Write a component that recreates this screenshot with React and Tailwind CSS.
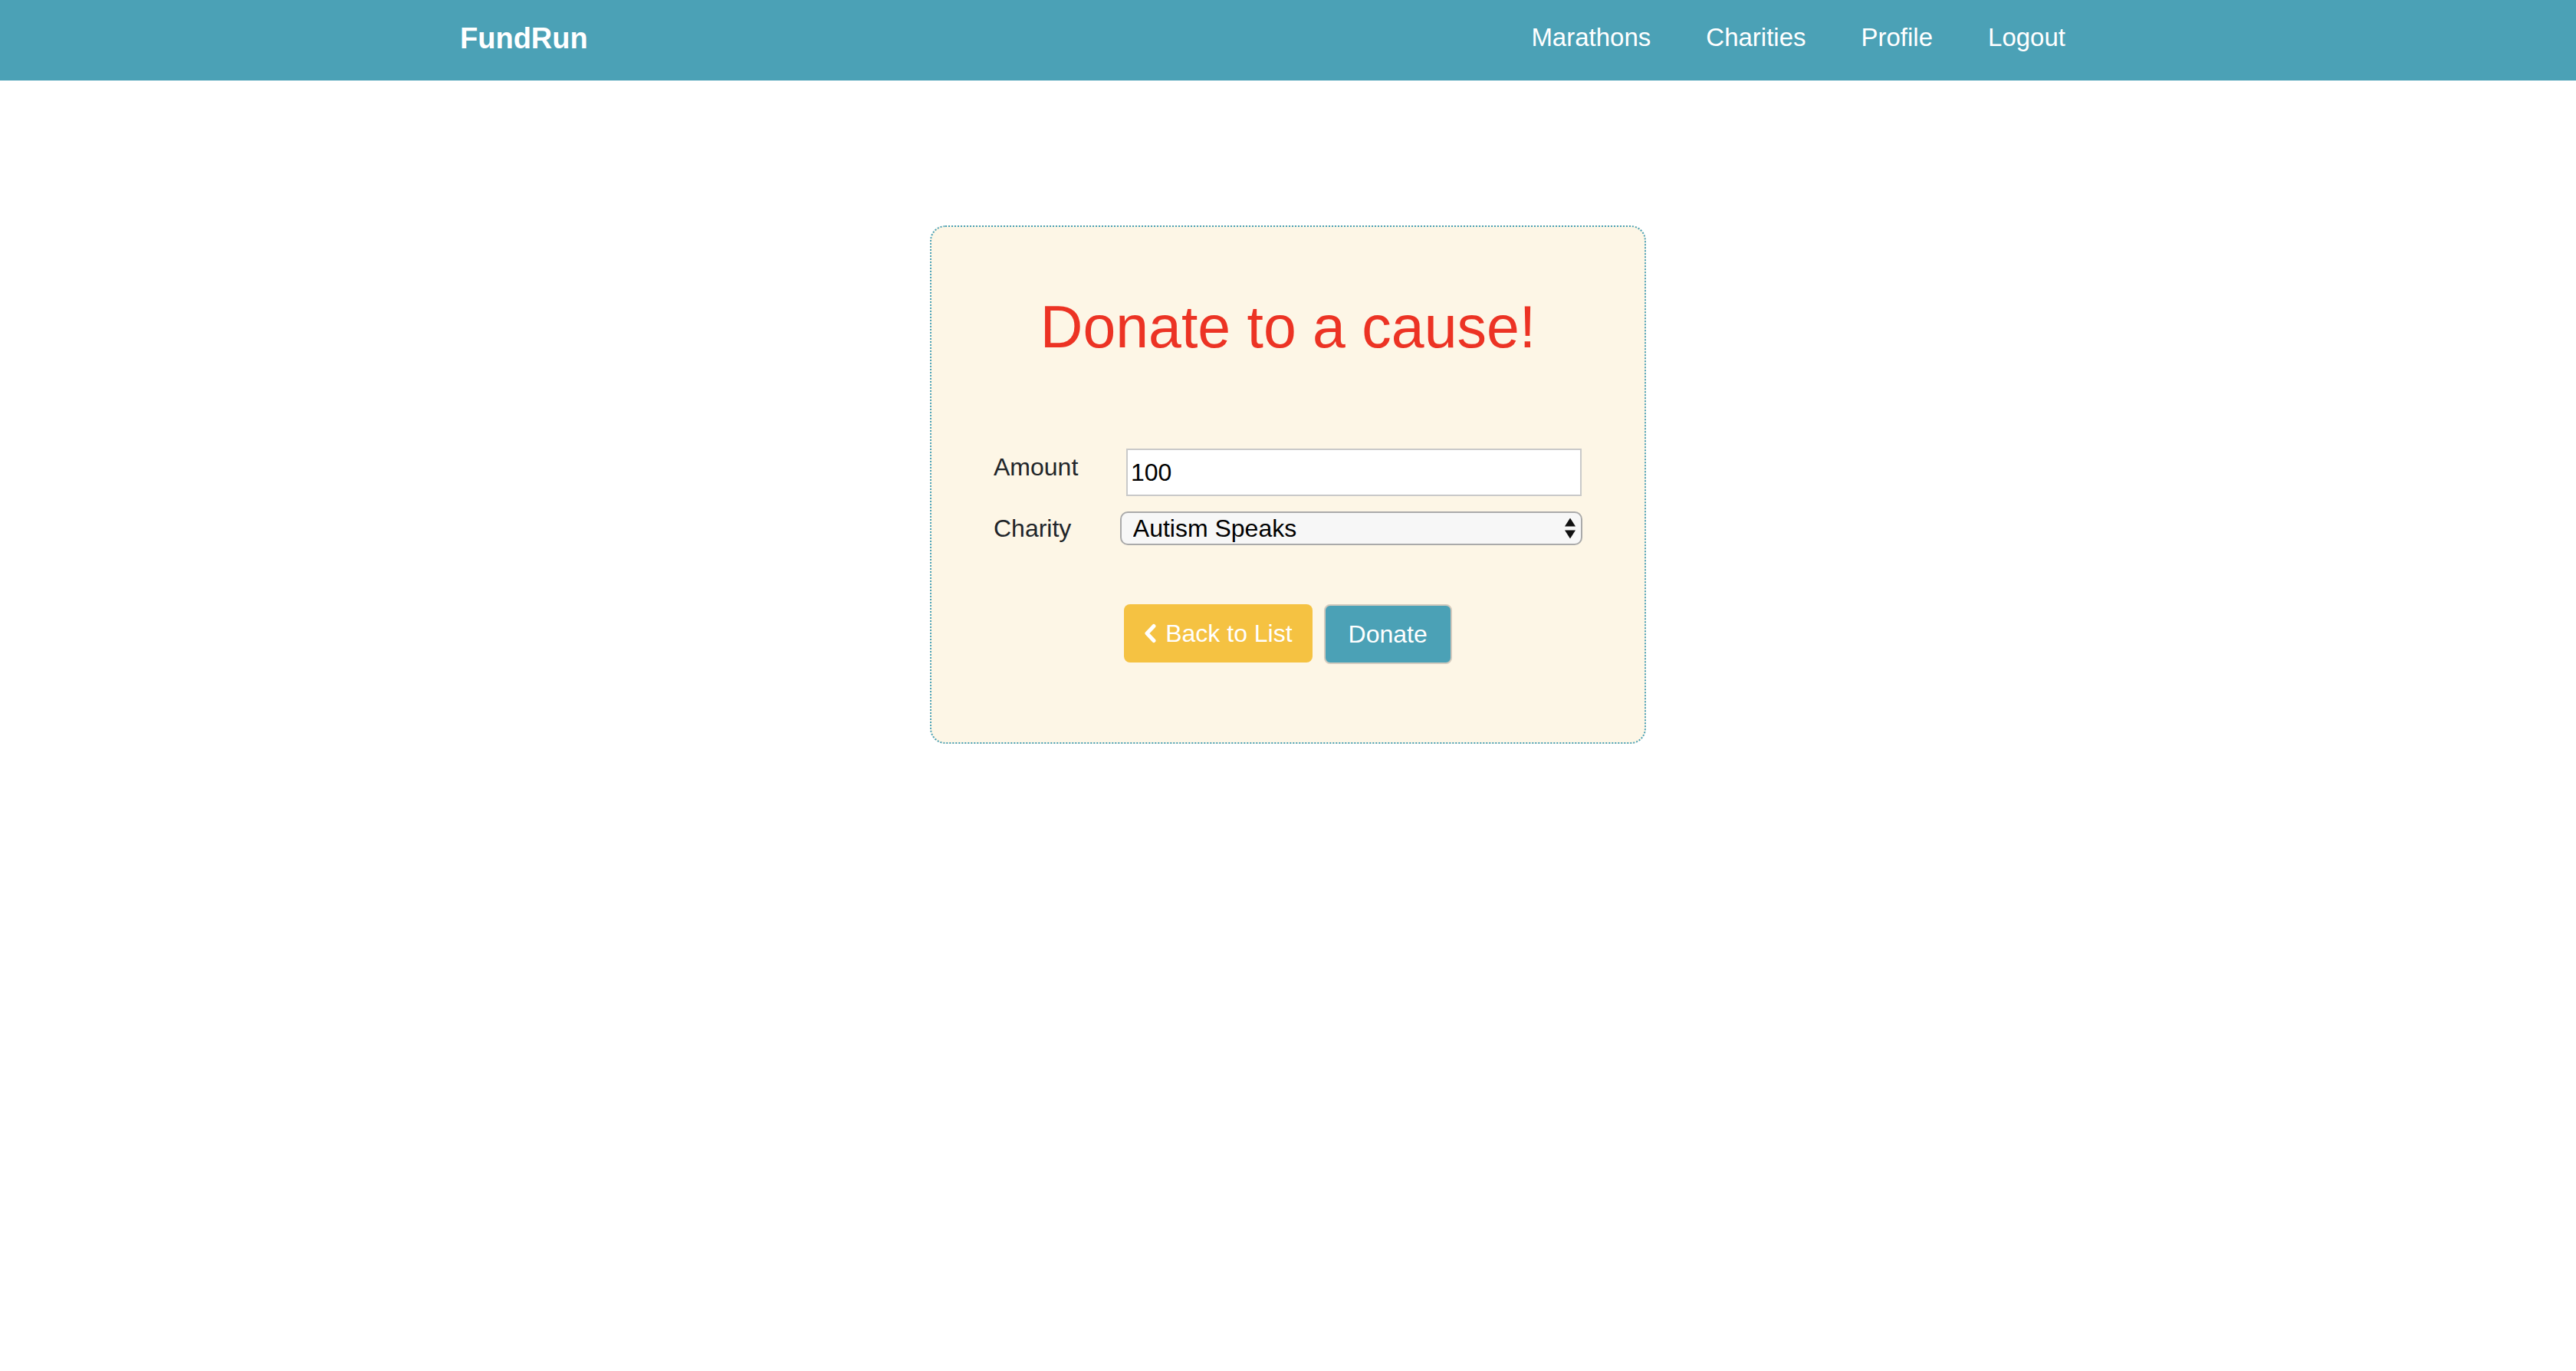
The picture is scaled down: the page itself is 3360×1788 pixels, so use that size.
import { useState } from "react"

const NAV_LINKS = ["Marathons", "Charities", "Profile", "Logout"]

const Navbar = () => (
  <nav className="h-[105px] bg-[#4ba1b6] pl-[600px] pr-[666px] pb-[6px] flex items-center justify-between">
    <a href="#" className="text-white font-bold text-[38px] leading-none">FundRun</a>
    <ul className="flex items-center gap-[72px]">
      {NAV_LINKS.map((link) => (
        <li key={link}>
          <a href="#" className="text-white text-[33px] leading-none">{link}</a>
        </li>
      ))}
    </ul>
  </nav>
)

const ChevronLeft = () => (
  <svg width="17" height="26" viewBox="0 0 17 26" fill="none">
    <polyline points="13,3.5 4,13 13,22.5" stroke="white" strokeWidth="5" strokeLinecap="round" strokeLinejoin="round" />
  </svg>
)

const SelectArrows = () => (
  <svg width="14" height="27" viewBox="0 0 14 27" className="absolute right-[9px] top-1/2 -translate-y-1/2 pointer-events-none">
    <polygon points="7,0 14,11 0,11" fill="#111" />
    <polygon points="0,16 14,16 7,27" fill="#111" />
  </svg>
)

const App = () => {
  const [amount, setAmount] = useState("100")
  const [charity, setCharity] = useState("Autism Speaks")

  return (
    <div className="min-h-screen bg-white font-['Liberation_Sans',Arial,sans-serif]">
      <Navbar />

      {/* Donation card */}
      <div className="mt-[189px] mx-auto w-[934px] border-2 border-dotted border-[#4ba1b6] rounded-[20px] bg-[#fdf6e6] pt-[83px] px-[81px] pb-[102px]">
        <h1 className="text-center text-[77px] leading-[94px] text-[#ec3324]">Donate to a cause!</h1>

        <form className="mt-[112px]" onSubmit={(e) => e.preventDefault()}>
          <div className="flex items-start">
            <label className="w-[165px] text-[32px] leading-[48px] text-[#212529]">Amount</label>
            <input
              type="text"
              value={amount}
              onChange={(e) => setAmount(e.target.value)}
              className="ml-[8px] w-[594px] h-[62px] border-2 border-[#c9c9c9] bg-white px-[4px] text-[32px] text-black outline-none"
            />
          </div>

          <div className="mt-[20px] flex items-center">
            <label className="w-[165px] text-[32px] leading-[44px] text-[#212529]">Charity</label>
            <div className="relative w-[604px] h-[44px]">
              <select
                value={charity}
                onChange={(e) => setCharity(e.target.value)}
                className="appearance-none w-full h-full border-2 border-[#aaaaaa] rounded-[10px] bg-[#f7f7f7] pl-[15px] text-[32px] leading-[38px] text-black outline-none"
              >
                <option>Autism Speaks</option>
                <option>Red Cross</option>
                <option>UNICEF</option>
              </select>
              <SelectArrows />
            </div>
          </div>

          <div className="mt-[77px] flex justify-center items-start gap-[15px]">
            <button type="button" className="h-[76px] px-[26px] bg-[#f5c242] rounded-[8px] flex items-center gap-[11px] text-white text-[32px]">
              <ChevronLeft />
              <span>Back to List</span>
            </button>
            <button type="submit" className="h-[78px] px-[30px] bg-[#4ba1b6] border-2 border-[#d2cabe] rounded-[8px] text-white text-[32px]">
              Donate
            </button>
          </div>
        </form>
      </div>
    </div>
  )
}

export default App
